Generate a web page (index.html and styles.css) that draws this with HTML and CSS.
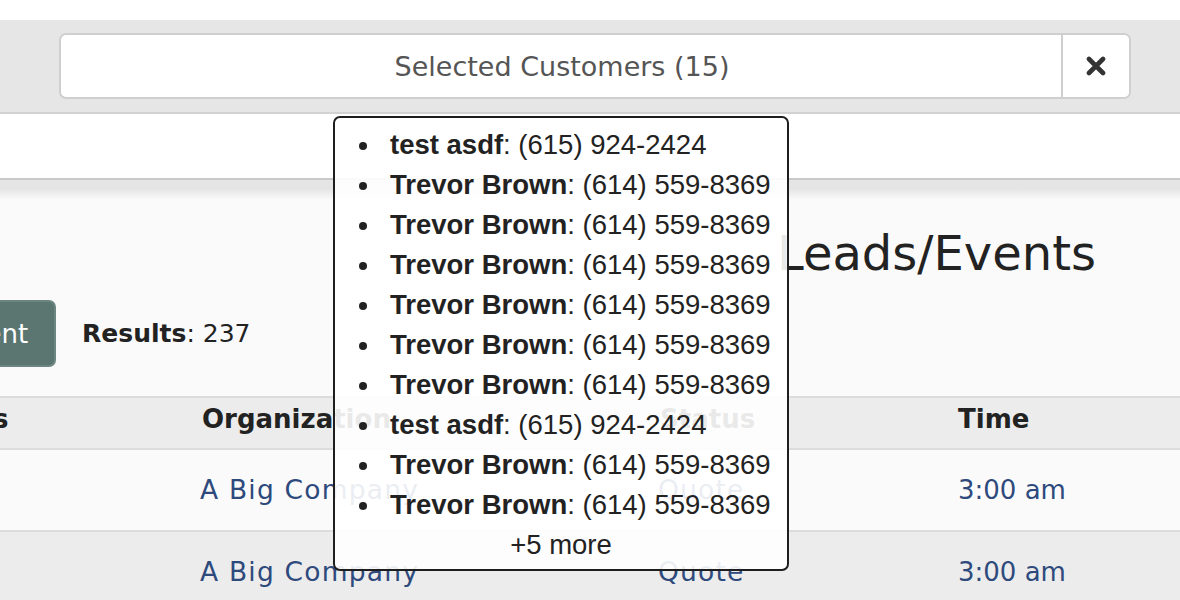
FILE: index.html
```html
<!DOCTYPE html>
<html lang="en">
<head>
<meta charset="utf-8">
<title>Leads/Events</title>
<link rel="stylesheet" href="styles.css">
</head>
<body>
<div class="topspace"></div>
<header class="filterbar">
  <div class="input-group">
    <div class="field">Selected Customers (15)</div>
    <button class="clear" type="button" aria-label="Clear">
      <svg width="20" height="20" viewBox="0 0 20 20"><path d="M3 3 L17 17 M17 3 L3 17" stroke="#333" stroke-width="4.6" stroke-linecap="round" fill="none"/></svg>
    </button>
  </div>
</header>
<div class="subbar"></div>
<main class="content">
  <h1 class="title">Leads/Events</h1>
  <div class="toolbar">
    <button class="btn" type="button">Add Event</button>
    <span class="results"><b>Results</b>: 237</span>
  </div>
  <div class="table">
    <div class="row head">
      <div class="cell">Customers</div>
      <div class="cell">Organization</div>
      <div class="cell">Status</div>
      <div class="cell">Time</div>
    </div>
    <div class="row odd">
      <div class="cell"></div>
      <div class="cell wide"><a href="#">A Big Company</a></div>
      <div class="cell wide"><a href="#">Quote</a></div>
      <div class="cell"><a href="#">3:00 am</a></div>
    </div>
    <div class="row even">
      <div class="cell"></div>
      <div class="cell wide"><a href="#">A Big Company</a></div>
      <div class="cell wide"><a href="#">Quote</a></div>
      <div class="cell"><a href="#">3:00 am</a></div>
    </div>
  </div>
</main>
<div class="tooltip">
  <ul class="tip-list">
    <li><b>test asdf</b>: (615) 924-2424</li>
    <li><b>Trevor Brown</b>: (614) 559-8369</li>
    <li><b>Trevor Brown</b>: (614) 559-8369</li>
    <li><b>Trevor Brown</b>: (614) 559-8369</li>
    <li><b>Trevor Brown</b>: (614) 559-8369</li>
    <li><b>Trevor Brown</b>: (614) 559-8369</li>
    <li><b>Trevor Brown</b>: (614) 559-8369</li>
    <li><b>test asdf</b>: (615) 924-2424</li>
    <li><b>Trevor Brown</b>: (614) 559-8369</li>
    <li><b>Trevor Brown</b>: (614) 559-8369</li>
  </ul>
  <div class="more">+5 more</div>
</div>
</body>
</html>
```
FILE: styles.css
```css
html, body {
  margin: 0;
  padding: 0;
}
body {
  position: relative;
  width: 1180px;
  height: 600px;
  overflow: hidden;
  background: #fafafa;
  font-family: "DejaVu Sans", sans-serif;
  color: #222;
}
.topspace {
  height: 20px;
  background: #fff;
}
.filterbar {
  background: #e6e6e6;
  padding: 13px 49px 13px 59px;
  border-bottom: 2px solid #d2d2d2;
}
.input-group {
  display: flex;
  height: 66px;
  box-sizing: border-box;
  border: 2px solid #cfcfcf;
  border-radius: 7px;
  background: #fff;
  overflow: hidden;
}
.field {
  flex: 1;
  display: flex;
  align-items: center;
  justify-content: center;
  font-size: 27px;
  color: #555;
  padding-left: 2px;
}
.clear {
  width: 68px;
  border: 0;
  border-left: 2px solid #cfcfcf;
  background: #fff;
  display: flex;
  align-items: center;
  justify-content: center;
  padding: 0;
  margin: 0;
}
.subbar {
  height: 64px;
  background: #fff;
  border-bottom: 2px solid #c8c8c8;
}
.content {
  background: linear-gradient(#e5e5e5 0, #e5e5e5 9px, #fafafa 20px);
  padding-top: 50px;
}
.title {
  margin: 0 0 0 777px;
  font-size: 48px;
  line-height: 47px;
  font-weight: normal;
  color: #222;
}
.toolbar {
  display: flex;
  align-items: center;
  gap: 26px;
  margin: 23px 0 0 -133px;
}
.btn {
  height: 67px;
  box-sizing: border-box;
  border: 2px solid #6e8681;
  border-radius: 7px;
  background: #5b7671;
  color: #fff;
  font-family: "DejaVu Sans", sans-serif;
  font-size: 26px;
  padding: 0 26px;
}
.results {
  font-size: 25px;
  color: #222;
}
.results b {
  font-weight: bold;
}
.table {
  margin: 29px 0 0 -160px;
  width: 1340px;
  border-top: 2px solid #dcdcdc;
}
.row {
  display: grid;
  grid-template-columns: 350px 458px 298px 1fr;
  border-bottom: 2px solid #dcdcdc;
}
.cell {
  padding: 0 12px;
  font-size: 26px;
}
.head {
  background: #ececec;
}
.head .cell {
  font-weight: bold;
  line-height: 42px;
  padding-bottom: 8px;
  color: #222;
}
.odd {
  background: #fafafa;
}
.even {
  background: #ececec;
}
.odd .cell, .even .cell {
  line-height: 80px;
  height: 80px;
}
.cell.wide {
  font-size: 26.5px;
  letter-spacing: 1.2px;
  padding-left: 10px;
}
.cell a {
  color: #2e4a7d;
  text-decoration: none;
}
.tooltip {
  position: absolute;
  left: 333px;
  top: 116px;
  width: 456px;
  height: 455px;
  box-sizing: border-box;
  border: 2px solid #1e1e1e;
  border-radius: 7px;
  background: rgba(255, 255, 255, 0.9);
  font-family: "Liberation Sans", Arial, sans-serif;
  font-size: 27.5px;
  color: #222;
  padding-top: 7px;
}
.tip-list {
  list-style: none;
  margin: 0;
  padding: 0 0 0 24px;
}
.tip-list li {
  display: flex;
  align-items: center;
  line-height: 40px;
  white-space: nowrap;
}
.tip-list li::before {
  content: "";
  flex: none;
  width: 8px;
  height: 8px;
  border-radius: 50%;
  background: #222;
  margin: 2px 23px 0 0;
}
.tip-list b {
  font-weight: bold;
}
.more {
  text-align: center;
  line-height: 40px;
}
```
